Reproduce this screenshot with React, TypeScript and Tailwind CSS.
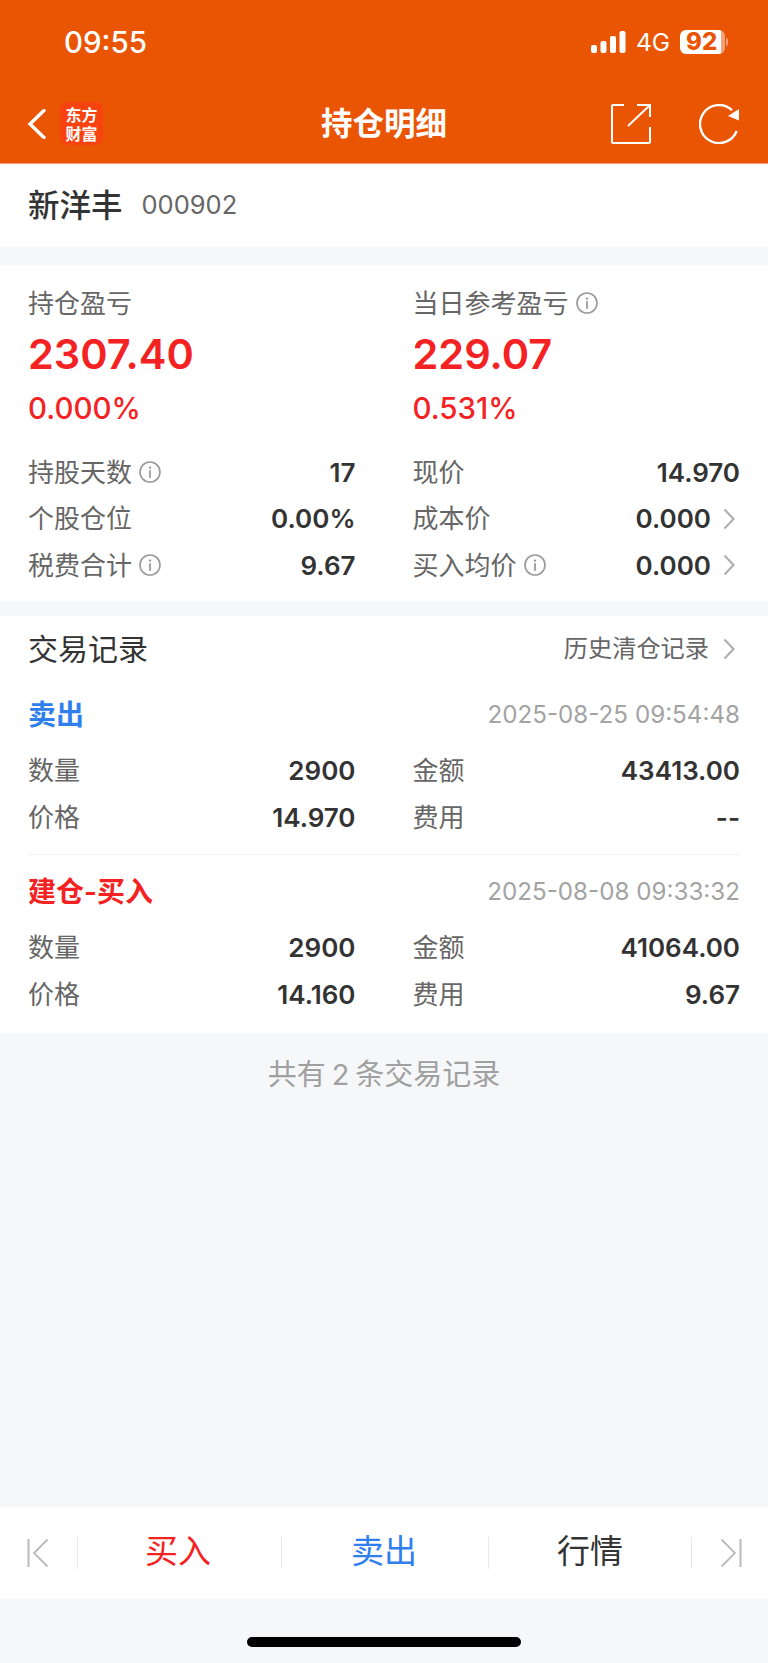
import type { ReactNode } from "react";

function Info() {
  return (
    <svg viewBox="0 0 22 22" className="ml-[7px] h-[22px] w-[22px] shrink-0" fill="none">
      <circle cx="11" cy="11" r="10" stroke="#999" strokeWidth="1.6" />
      <circle cx="11" cy="6.6" r="1.2" fill="#999" />
      <rect x="10.1" y="9.2" width="1.8" height="7.6" fill="#999" />
    </svg>
  );
}

function Chevron() {
  return (
    <svg viewBox="0 0 12 22" className="ml-[12px] mr-[5px] h-[22px] w-[12px] shrink-0" fill="none">
      <path d="M1.5 1.5 10.5 11 1.5 20.5" stroke="#b0b0b0" strokeWidth="2.2" />
    </svg>
  );
}

function Row({ label, value, info, arrow }: { label: string; value: string; info?: boolean; arrow?: boolean }) {
  return (
    <div className="flex h-[46.5px] items-center justify-between">
      <div className="flex items-center">
        <span className="text-[26px] text-[#666]">{label}</span>
        {info && <Info />}
      </div>
      <div className="flex items-center">
        <span className="text-[26px] font-semibold text-[#333]">{value}</span>
        {arrow && <Chevron />}
      </div>
    </div>
  );
}

function Summary({ label, value, pct, info }: { label: string; value: string; pct: string; info?: boolean }) {
  return (
    <div>
      <div className="flex h-[38px] items-center">
        <span className="text-[26px] text-[#666]">{label}</span>
        {info && <Info />}
      </div>
      <div className="flex h-[64px] items-center text-[41.5px] font-semibold text-[#f42222]">{value}</div>
      <div className="flex h-[45px] items-center text-[29.5px] font-medium text-[#f42222]">{pct}</div>
    </div>
  );
}

function Trade({ title, color, time, children }: { title: string; color: string; time: string; children: ReactNode }) {
  return (
    <div>
      <div className="flex h-[46px] items-center justify-between">
        <span className={`text-[28px] font-semibold ${color}`}>{title}</span>
        <span className="text-[24.2px] text-[#a3a3a3]">{time}</span>
      </div>
      <div className="mt-[9.5px] grid grid-cols-2 gap-x-[57px]">{children}</div>
    </div>
  );
}

function BarDivider() {
  return <div className="h-[32px] w-px shrink-0 bg-[#e8e8e8]" />;
}

export default function App() {
  return (
    <div className="flex h-[1663px] w-[768px] flex-col overflow-hidden bg-[#f6f7f9] font-[family-name:Inter,'Noto_Sans_CJK_SC',sans-serif]">
      {/* Header */}
      <header className="h-[164px] shrink-0 border-b border-[#f5a27a] bg-[#ea5504] text-white">
        <div className="flex h-[84px] items-center justify-between pl-[64px] pr-[40px]">
          <span className="text-[29.5px] font-medium">09:55</span>
          <div className="flex items-center">
            <svg viewBox="0 0 35 22" className="h-[22px] w-[35px]" fill="white">
              <rect x="0" y="14" width="6" height="8" rx="2" />
              <rect x="9.5" y="10" width="6" height="12" rx="2" />
              <rect x="19" y="5" width="6" height="17" rx="2" />
              <rect x="28.5" y="0" width="6" height="22" rx="2" />
            </svg>
            <span className="ml-[10px] text-[24.5px]">4G</span>
            <div className="ml-[10px] flex h-[24px] w-[45px] items-center rounded-[6px] bg-[linear-gradient(90deg,#fff_92%,#f5a27a_92%)] pl-[6px] text-[24px] font-extrabold leading-none text-[#ea5504]">
              92
            </div>
            <div className="ml-px h-[8px] w-[2px] rounded-r bg-[#f5a27a]" />
          </div>
        </div>
        <div className="relative flex h-[79px] items-center pl-[27px] pr-[29px]">
          <svg viewBox="0 0 19 30" className="h-[30px] w-[19px]" fill="none">
            <path d="M17 1.5 3 15l14 13.5" stroke="white" strokeWidth="3.4" strokeLinecap="round" />
          </svg>
          <div className="relative z-10 ml-[14px] flex h-[43px] w-[43px] flex-col items-center justify-center rounded-[8px] bg-[#f8420f] font-[family-name:'Noto_Sans_CJK_SC',sans-serif] text-[16px] font-bold leading-[19px]">
            <span>东方</span>
            <span>财富</span>
          </div>
          <div className="absolute left-1/2 -translate-x-1/2 text-[31.5px] font-semibold">持仓明细</div>
          <div className="ml-auto flex items-center gap-[48px]">
            <svg viewBox="0 0 40 40" className="h-[40px] w-[40px]" fill="none" stroke="white" strokeWidth="2">
              <path d="M13 1H2a1 1 0 0 0-1 1v36a1 1 0 0 0 1 1h36a1 1 0 0 0 1-1V23" />
              <path d="M17 22 39 1" />
              <path d="M26 1h13v12" />
            </svg>
            <svg viewBox="0 0 40 40" className="h-[40px] w-[40px]" fill="none">
              <path d="M37.7 27A19 19 0 1 1 33 6.2" stroke="white" strokeWidth="2.4" />
              <path d="M40 5v11.5L29 12z" fill="white" />
            </svg>
          </div>
        </div>
      </header>

      {/* Stock name */}
      <section className="flex h-[83px] shrink-0 items-center bg-white px-[28px]">
        <span className="text-[31.5px] font-medium text-[#333]">新洋丰</span>
        <span className="ml-[19px] text-[25.5px] text-[#666]">000902</span>
      </section>

      {/* Position summary */}
      <section className="mt-[18px] h-[336px] shrink-0 bg-white px-[28px] pt-[19px]">
        <div className="grid grid-cols-2 gap-x-[57px]">
          <Summary label="持仓盈亏" value="2307.40" pct="0.000%" />
          <Summary label="当日参考盈亏" value="229.07" pct="0.531%" info />
        </div>
        <div className="mt-[18px] grid grid-cols-2 gap-x-[57px]">
          <div>
            <Row label="持股天数" value="17" info />
            <Row label="个股仓位" value="0.00%" />
            <Row label="税费合计" value="9.67" info />
          </div>
          <div>
            <Row label="现价" value="14.970" />
            <Row label="成本价" value="0.000" arrow />
            <Row label="买入均价" value="0.000" info arrow />
          </div>
        </div>
      </section>

      {/* Trade records */}
      <section className="mt-[15px] h-[417px] shrink-0 bg-white px-[28px]">
        <div className="flex h-[66px] items-center justify-between">
          <span className="text-[30px] text-[#333]">交易记录</span>
          <div className="flex items-center">
            <span className="mr-[2px] text-[24.2px] text-[#666]">历史清仓记录</span>
            <Chevron />
          </div>
        </div>
        <div className="pt-[10px]">
          <Trade title="卖出" color="text-[#2f80ed]" time="2025-08-25 09:54:48">
            <Row label="数量" value="2900" />
            <Row label="金额" value="43413.00" />
            <Row label="价格" value="14.970" />
            <Row label="费用" value="--" />
          </Trade>
        </div>
        <div className="mt-[13.5px] border-t border-[#f3f3f3] pt-[14px]">
          <Trade title="建仓-买入" color="text-[#f42222]" time="2025-08-08 09:33:32">
            <Row label="数量" value="2900" />
            <Row label="金额" value="41064.00" />
            <Row label="价格" value="14.160" />
            <Row label="费用" value="9.67" />
          </Trade>
        </div>
      </section>

      <div className="flex h-[83px] shrink-0 items-center justify-center text-[29px] text-[#a0a0a0]">
        共有<span className="mx-[6px]">2</span>条交易记录
      </div>

      <div className="flex-1" />

      {/* Bottom bar */}
      <nav className="flex h-[92px] shrink-0 items-center bg-white text-[33px]">
        <div className="flex w-[77px] shrink-0 justify-center pr-[1px]">
          <svg viewBox="0 0 22 30" className="h-[30px] w-[22px]" fill="none">
            <path d="M1.5 1v28" stroke="#bbb" strokeWidth="2" />
            <path d="M20.5 1.5 7 15l13.5 13.5" stroke="#bbb" strokeWidth="1.8" />
          </svg>
        </div>
        <BarDivider />
        <div className="flex w-[203px] shrink-0 justify-center pb-[2px] pr-[3px] text-[#f42222]">买入</div>
        <BarDivider />
        <div className="flex w-[206px] shrink-0 justify-center pb-[2px] pr-[2px] text-[#2f80ed]">卖出</div>
        <BarDivider />
        <div className="flex w-[202px] shrink-0 justify-center pb-[2px] text-[#333]">行情</div>
        <BarDivider />
        <div className="flex flex-1 justify-center pl-[1px]">
          <svg viewBox="0 0 22 30" className="h-[30px] w-[22px]" fill="none">
            <path d="M20.5 1v28" stroke="#bbb" strokeWidth="2" />
            <path d="M1.5 1.5 15 15 1.5 28.5" stroke="#bbb" strokeWidth="1.8" />
          </svg>
        </div>
      </nav>

      {/* Home indicator */}
      <div className="flex h-[64px] shrink-0 justify-center pt-[38px]">
        <div className="h-[10px] w-[274px] rounded-full bg-black" />
      </div>
    </div>
  );
}
